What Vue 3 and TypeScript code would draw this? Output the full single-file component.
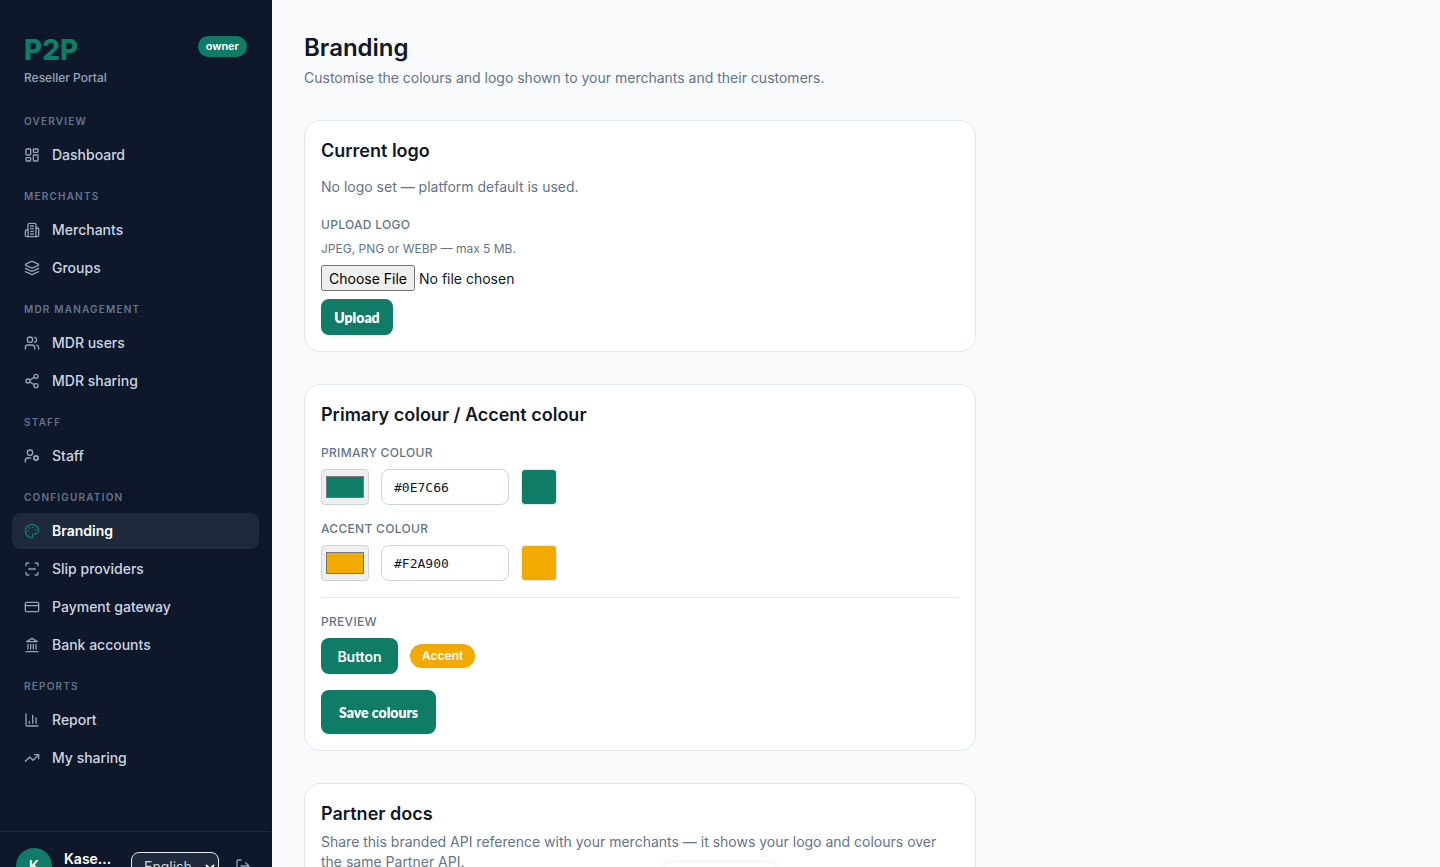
<script setup lang="ts">
import { ref } from 'vue'

interface NavItem {
  label: string
  icon: string
  active?: boolean
}
interface NavSection {
  title: string
  items: NavItem[]
}

const icons: Record<string, string> = {
  dashboard:
    '<rect x="3" y="3" width="7" height="9" rx="1"/><rect x="14" y="3" width="7" height="5" rx="1"/><rect x="14" y="12" width="7" height="9" rx="1"/><rect x="3" y="16" width="7" height="5" rx="1"/>',
  building:
    '<path d="M6 22V4a2 2 0 0 1 2-2h8a2 2 0 0 1 2 2v18Z"/><path d="M6 12H4a2 2 0 0 0-2 2v6a2 2 0 0 0 2 2h2"/><path d="M18 9h2a2 2 0 0 1 2 2v9a2 2 0 0 1-2 2h-2"/><path d="M10 6h4M10 10h4M10 14h4M10 18h4"/>',
  layers:
    '<path d="m12.83 2.18a2 2 0 0 0-1.66 0L2.6 6.08a1 1 0 0 0 0 1.83l8.58 3.91a2 2 0 0 0 1.66 0l8.58-3.9a1 1 0 0 0 0-1.83Z"/><path d="m22 12.5-9.17 4.16a2 2 0 0 1-1.66 0L2 12.5"/><path d="m22 17.5-9.17 4.16a2 2 0 0 1-1.66 0L2 17.5"/>',
  users:
    '<path d="M16 21v-2a4 4 0 0 0-4-4H6a4 4 0 0 0-4 4v2"/><circle cx="9" cy="7" r="4"/><path d="M22 21v-2a4 4 0 0 0-3-3.87"/><path d="M16 3.13a4 4 0 0 1 0 7.75"/>',
  share:
    '<circle cx="18" cy="5" r="3"/><circle cx="6" cy="12" r="3"/><circle cx="18" cy="19" r="3"/><path d="m8.59 13.51 6.83 3.98M15.41 6.51l-6.82 3.98"/>',
  staff:
    '<circle cx="9" cy="7" r="4"/><path d="M10 15H6a4 4 0 0 0-4 4v2"/><circle cx="18" cy="15" r="3"/><path d="m21.7 16.4-.9-.3M15.2 13.9l-.9-.3M16.6 18.7l.3-.9M19.1 12.2l.3-.9M19.6 18.7l-.4-1M16.8 12.3l-.4-1M14.3 16.6l1-.4M20.7 13.8l1-.4"/>',
  palette:
    '<circle cx="13.5" cy="6.5" r=".5"/><circle cx="17.5" cy="10.5" r=".5"/><circle cx="8.5" cy="7.5" r=".5"/><circle cx="6.5" cy="12.5" r=".5"/><path d="M12 2C6.5 2 2 6.5 2 12s4.5 10 10 10c.926 0 1.648-.746 1.648-1.688 0-.437-.18-.835-.437-1.125-.29-.289-.438-.652-.438-1.125a1.64 1.64 0 0 1 1.668-1.668h1.996c3.051 0 5.555-2.503 5.555-5.554C21.965 6.012 17.461 2 12 2z"/>',
  scan:
    '<path d="M3 7V5a2 2 0 0 1 2-2h2M17 3h2a2 2 0 0 1 2 2v2M21 17v2a2 2 0 0 1-2 2h-2M7 21H5a2 2 0 0 1-2-2v-2M7 12h10"/>',
  card: '<rect x="2" y="5" width="20" height="14" rx="2"/><path d="M2 10h20"/>',
  bank: '<path d="M3 22h18M6 18v-7M10 18v-7M14 18v-7M18 18v-7M12 2l8 5H4Z"/>',
  chart: '<path d="M3 3v16a2 2 0 0 0 2 2h16M13 17V5M18 17V9M8 17v-3"/>',
  trend: '<path d="m22 7-8.5 8.5-5-5L2 17"/><path d="M16 7h6v6"/>',
  logout:
    '<path d="M9 21H5a2 2 0 0 1-2-2V5a2 2 0 0 1 2-2h4"/><path d="m16 17 5-5-5-5M21 12H9"/>',
}

const sections: NavSection[] = [
  { title: 'Overview', items: [{ label: 'Dashboard', icon: 'dashboard' }] },
  {
    title: 'Merchants',
    items: [
      { label: 'Merchants', icon: 'building' },
      { label: 'Groups', icon: 'layers' },
    ],
  },
  {
    title: 'MDR management',
    items: [
      { label: 'MDR users', icon: 'users' },
      { label: 'MDR sharing', icon: 'share' },
    ],
  },
  { title: 'Staff', items: [{ label: 'Staff', icon: 'staff' }] },
  {
    title: 'Configuration',
    items: [
      { label: 'Branding', icon: 'palette', active: true },
      { label: 'Slip providers', icon: 'scan' },
      { label: 'Payment gateway', icon: 'card' },
      { label: 'Bank accounts', icon: 'bank' },
    ],
  },
  {
    title: 'Reports',
    items: [
      { label: 'Report', icon: 'chart' },
      { label: 'My sharing', icon: 'trend' },
    ],
  },
]

const primary = ref('#0E7C66')
const accent = ref('#F2A900')
const language = ref('en')
</script>

<template>
  <div class="shell">
    <aside class="sidebar">
      <header class="brand">
        <div>
          <div class="brand-name">P2P</div>
          <div class="brand-sub">Reseller Portal</div>
        </div>
        <span class="role">owner</span>
      </header>
      <nav class="nav">
        <section v-for="s in sections" :key="s.title" class="nav-section">
          <h3 class="nav-title">{{ s.title }}</h3>
          <a
            v-for="item in s.items"
            :key="item.label"
            href="#"
            class="nav-item"
            :class="{ active: item.active }"
          >
            <svg class="icon" viewBox="0 0 24 24" aria-hidden="true" v-html="icons[item.icon]"></svg>
            <span>{{ item.label }}</span>
          </a>
        </section>
      </nav>
      <footer class="account">
        <span class="avatar">K</span>
        <div class="account-name">Kase…</div>
        <div class="select-wrap">
          <select v-model="language" class="language" aria-label="Language">
            <option value="en">English</option>
          </select>
          <svg class="chevron" viewBox="0 0 10 6" aria-hidden="true"><path d="m1 1 4 4 4-4" /></svg>
        </div>
        <button type="button" class="logout" aria-label="Sign out">
          <svg class="icon" viewBox="0 0 24 24" aria-hidden="true" v-html="icons.logout"></svg>
        </button>
      </footer>
    </aside>

    <main class="main">
      <header class="page-head">
        <h1>Branding</h1>
        <p class="muted">Customise the colours and logo shown to your merchants and their customers.</p>
      </header>

      <section class="card">
        <h2>Current logo</h2>
        <p class="muted logo-state">No logo set — platform default is used.</p>
        <label class="field-label" for="logo">Upload logo</label>
        <p class="hint">JPEG, PNG or WEBP — max 5 MB.</p>
        <input id="logo" type="file" class="file" accept="image/jpeg,image/png,image/webp" />
        <button type="button" class="btn upload">Upload</button>
      </section>

      <section class="card">
        <h2>Primary colour / Accent colour</h2>
        <div class="field">
          <label class="field-label" for="primary">Primary colour</label>
          <div class="row">
            <input v-model="primary" type="color" class="picker" aria-label="Primary colour picker" />
            <input id="primary" v-model="primary" type="text" class="hex" />
            <span class="swatch" :style="{ backgroundColor: primary }"></span>
          </div>
        </div>
        <div class="field">
          <label class="field-label" for="accent">Accent colour</label>
          <div class="row">
            <input v-model="accent" type="color" class="picker" aria-label="Accent colour picker" />
            <input id="accent" v-model="accent" type="text" class="hex" />
            <span class="swatch" :style="{ backgroundColor: accent }"></span>
          </div>
        </div>
        <div class="preview">
          <div class="field-label">Preview</div>
          <div class="row">
            <button type="button" class="btn sample" :style="{ backgroundColor: primary }">Button</button>
            <span class="accent-pill" :style="{ backgroundColor: accent }">Accent</span>
          </div>
        </div>
        <button type="button" class="btn save">Save colours</button>
      </section>

      <section class="card">
        <h2>Partner docs</h2>
        <p class="muted docs">
          Share this branded API reference with your merchants — it shows your logo and colours over
          the same Partner API.
        </p>
      </section>
    </main>
    <div class="toast" aria-hidden="true"></div>
  </div>
</template>

<style>
body {
  margin: 0;
  background: #f8fafc;
}
</style>

<style scoped>
* {
  box-sizing: border-box;
}
.shell {
  display: flex;
  height: 100vh;
  overflow: hidden;
  font-family: Inter, 'Liberation Sans', sans-serif;
  font-size: 14px;
  line-height: 20px;
  color: #0f172a;
  background: #f8fafc;
}
h1,
h2,
h3,
p {
  margin: 0;
}
.sidebar {
  display: flex;
  flex-direction: column;
  flex: none;
  align-self: flex-start;
  width: 272px;
  min-height: 100vh;
  background: #0f172a;
  border-right: 1px solid #0f172a;
}
.brand {
  display: flex;
  justify-content: space-between;
  align-items: flex-start;
  padding: 36px 24px 28px;
}
.brand-name {
  font-size: 28px;
  line-height: 28px;
  font-weight: 800;
  color: #0e7c66;
}
.brand-sub {
  margin-top: 6px;
  font-size: 12px;
  line-height: 16px;
  font-weight: 500;
  color: #94a3b8;
}
.role {
  padding: 2px 8px;
  border-radius: 12px;
  background: #0e7c66;
  color: #fff;
  font-size: 11px;
  line-height: 17px;
  font-weight: 600;
}
.nav {
  display: flex;
  flex-direction: column;
  gap: 16px;
  padding: 0 12px 55px;
}
.nav-section {
  display: flex;
  flex-direction: column;
  gap: 2px;
}
.nav-title {
  padding: 0 12px;
  margin-bottom: 6px;
  font-size: 10px;
  line-height: 15px;
  font-weight: 600;
  letter-spacing: 0.12em;
  text-transform: uppercase;
  color: #64748b;
}
.nav-item {
  display: flex;
  align-items: center;
  gap: 12px;
  height: 36px;
  padding: 0 12px;
  border-radius: 8px;
  color: #cbd5e1;
  font-weight: 500;
  text-decoration: none;
}
.icon {
  flex: none;
  width: 16px;
  height: 16px;
  fill: none;
  stroke: #94a3b8;
  stroke-width: 2;
  stroke-linecap: round;
  stroke-linejoin: round;
}
.nav-item.active {
  background: #1e293b;
  color: #fff;
  font-weight: 600;
}
.nav-item.active .icon {
  stroke: #0e7c66;
}
.account {
  display: flex;
  align-items: center;
  gap: 12px;
  padding: 16px;
  border-top: 1px solid #1e293b;
}
.avatar {
  display: flex;
  align-items: center;
  justify-content: center;
  flex: none;
  width: 36px;
  height: 36px;
  border-radius: 50%;
  background: #0e7c66;
  color: #fff;
  font-weight: 600;
}
.account-name {
  flex: 1;
  min-width: 0;
  min-height: 34px;
  overflow: hidden;
  color: #fff;
  font-weight: 600;
  white-space: nowrap;
}
.select-wrap {
  position: relative;
  flex: none;
  width: 88px;
}
.language {
  display: block;
  width: 100%;
  height: 28px;
  padding: 0 12px;
  border: 1px solid #e2e8f0;
  border-radius: 8px;
  background: #1e293b;
  color: #cbd5e1;
  font-family: inherit;
  font-size: 14px;
  appearance: none;
}
.chevron {
  position: absolute;
  top: 12px;
  right: 4px;
  width: 10px;
  height: 6px;
  fill: none;
  stroke: #e2e8f0;
  stroke-width: 2;
}
.logout {
  display: flex;
  padding: 4px;
  border: 0;
  background: none;
}
.logout .icon {
  stroke: #94a3b8;
}
.main {
  flex: 1;
  min-width: 0;
  padding: 32px;
}
.page-head {
  margin-bottom: 32px;
}
h1 {
  font-size: 24px;
  line-height: 32px;
  font-weight: 600;
}
h2 {
  font-size: 18px;
  line-height: 28px;
  font-weight: 600;
}
.muted {
  color: #64748b;
}
.page-head .muted,
.docs {
  margin-top: 4px;
}
.card {
  max-width: 672px;
  margin-bottom: 32px;
  padding: 16px;
  border: 1px solid #e2e8f0;
  border-radius: 16px;
  background: #fff;
}
.logo-state {
  margin: 12px 0 20px;
}
.field-label {
  display: block;
  margin-bottom: 8px;
  font-size: 12px;
  line-height: 16px;
  font-weight: 500;
  letter-spacing: 0.3px;
  text-transform: uppercase;
  color: #64748b;
}
.hint {
  margin-bottom: 8px;
  font-size: 12px;
  line-height: 16px;
  color: #64748b;
}
.file {
  display: block;
  margin-bottom: 8px;
  font-family: inherit;
  font-size: 14px;
  line-height: 20px;
  color: #0f172a;
}
.file::file-selector-button {
  height: 26px;
  font-family: inherit;
  font-size: 14px;
}
.field {
  margin-top: 16px;
}
.row {
  display: flex;
  align-items: center;
  gap: 12px;
}
.picker {
  width: 48px;
  height: 36px;
  padding: 2px;
  border: 1px solid #cbd5e1;
  border-radius: 4px;
}
.hex {
  width: 128px;
  height: 36px;
  padding: 0 12px;
  border: 1px solid #cbd5e1;
  border-radius: 8px;
  background: #fff;
  color: #0f172a;
  font-family: 'DejaVu Sans Mono', 'Liberation Mono', monospace;
  font-size: 13px;
}
.swatch {
  width: 36px;
  height: 36px;
  border: 1px solid #e2e8f0;
  border-radius: 4px;
}
.preview {
  margin-top: 16px;
  padding: 16px 0;
  border-top: 1px solid #e2e8f0;
}
.btn {
  display: block;
  height: 36px;
  padding: 0 12px;
  border: 0;
  border-radius: 8px;
  background: #0e7c66;
  color: #fff;
  font-family: inherit;
  font-size: 14px;
  font-weight: 600;
}
.btn.upload,
.btn.save {
  font-family: Lato, Inter, sans-serif;
  font-weight: 800;
}
.btn.upload {
  min-width: 72px;
}
.btn.sample {
  min-width: 77px;
  padding: 0 16px;
}
.btn.save {
  min-width: 115px;
  height: 44px;
  padding: 0 16px;
}
.accent-pill {
  padding: 4px 12px;
  border-radius: 12px;
  color: #fff;
  font-size: 12px;
  line-height: 16px;
  font-weight: 600;
}
.toast {
  position: fixed;
  left: 50%;
  bottom: -34px;
  width: 128px;
  height: 40px;
  margin-left: -64px;
  border: 1px solid #f1f5f9;
  border-radius: 20px;
  background: #fff;
  box-shadow: 0 0 8px rgba(15, 23, 42, 0.04);
}
</style>
